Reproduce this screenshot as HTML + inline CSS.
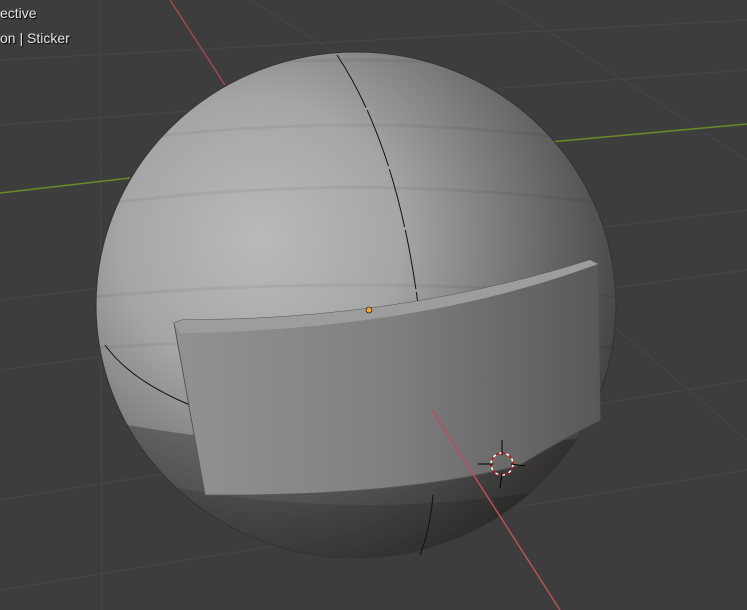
<!DOCTYPE html>
<html><head><style>
html,body{margin:0;padding:0;background:#3d3d3d;overflow:hidden}
.t{position:absolute;left:0;color:#e6e6e6;font:14px "Liberation Sans",sans-serif;text-shadow:1px 1px 1px #000}
</style></head><body>
<svg width="747" height="610" viewBox="0 0 747 610" style="position:absolute;left:0;top:0">
<defs>
<radialGradient id="sp" cx="260" cy="240" r="400" gradientUnits="userSpaceOnUse">
<stop offset="0" stop-color="#b8babb"/>
<stop offset="0.35" stop-color="#a5a6a7"/>
<stop offset="0.65" stop-color="#737374"/>
<stop offset="1" stop-color="#3a3836"/>
</radialGradient>
<linearGradient id="st" x1="180" y1="0" x2="600" y2="0" gradientUnits="userSpaceOnUse">
<stop offset="0" stop-color="#909192"/>
<stop offset="0.5" stop-color="#808081"/>
<stop offset="1" stop-color="#585858"/>
</linearGradient>
<clipPath id="cl"><ellipse cx="356" cy="305" rx="260" ry="253"/></clipPath>
</defs>
<g stroke="#474747" stroke-width="1" fill="none">
<line x1="0" y1="60" x2="747" y2="20"/>
<line x1="0" y1="125" x2="747" y2="70"/>
<line x1="0" y1="300" x2="747" y2="210"/>
<line x1="0" y1="370" x2="747" y2="270"/>
<line x1="0" y1="500" x2="747" y2="380"/>
<line x1="0" y1="590" x2="747" y2="470"/>
<line x1="100" y1="0" x2="102" y2="610"/>
<line x1="500" y1="0" x2="747" y2="160"/>
<line x1="560" y1="280" x2="747" y2="440"/>
<line x1="250" y1="0" x2="380" y2="80"/>
</g>
<line x1="0" y1="193" x2="130" y2="178" stroke="#6a8a2a" stroke-width="1.5"/>
<line x1="550" y1="142" x2="747" y2="124" stroke="#6a8a2a" stroke-width="1.5"/>
<line x1="170" y1="0" x2="225" y2="85" stroke="#a04850" stroke-width="1.5"/>
<ellipse cx="356" cy="305" rx="260" ry="253" fill="url(#sp)"/>
<g clip-path="url(#cl)">
<g stroke="#000" stroke-opacity="0.05" fill="none" stroke-width="3">
<path d="M60 90 Q356 30 650 90"/>
<path d="M60 150 Q356 100 650 150"/>
<path d="M60 210 Q356 165 650 210"/>
<path d="M60 300 Q356 270 650 300"/>
<path d="M60 350 Q356 330 650 350"/>
</g>
<path d="M100 420 Q356 470 650 430 L650 600 L60 600Z" fill="#000" fill-opacity="0.28"/>
<path d="M100 470 Q356 540 650 470 L650 600 L60 600Z" fill="#000" fill-opacity="0.12"/>
</g>
<ellipse cx="356" cy="305" rx="260" ry="253" fill="none" stroke="#333" stroke-width="1"/>
<path d="M337 55 Q400 150 420 320" stroke="#111" stroke-width="1" fill="none" stroke-dasharray="60 3"/>
<path d="M105 345 Q130 380 190 405" stroke="#111" stroke-width="1" fill="none"/>
<path d="M433 495 Q430 530 420 555" stroke="#111" stroke-width="1" fill="none"/>
<path d="M174 323 L182 320 Q400 320 590 260 L598 264 L600 420 Q560 440 520 465 Q400 497 205 495 Z" fill="url(#st)" stroke="#555" stroke-width="1"/>
<path d="M174 323 L182 320 Q400 320 590 260 L598 264 Q420 330 180 333 Z" fill="#9c9d9e"/>
<circle cx="369" cy="310" r="3" fill="#f0a030" stroke="#000" stroke-width="0.6"/>
<line x1="432" y1="410" x2="560" y2="610" stroke="#b85058" stroke-width="1.5"/>
<circle cx="502" cy="464" r="11" fill="none" stroke="#fff" stroke-width="1.5" stroke-dasharray="4 3"/>
<circle cx="502" cy="464" r="11" fill="none" stroke="#d00" stroke-width="1.5" stroke-dasharray="3 4" stroke-dashoffset="4"/>
<g stroke="#000" stroke-width="1"><line x1="502" y1="440" x2="502" y2="455"/><line x1="502" y1="473" x2="500" y2="488"/><line x1="478" y1="464" x2="493" y2="464"/><line x1="511" y1="464" x2="525" y2="466"/></g>
</svg>
<div class="t" style="top:5px">ective</div>
<div class="t" style="top:30px">on | Sticker</div>
</body></html>
